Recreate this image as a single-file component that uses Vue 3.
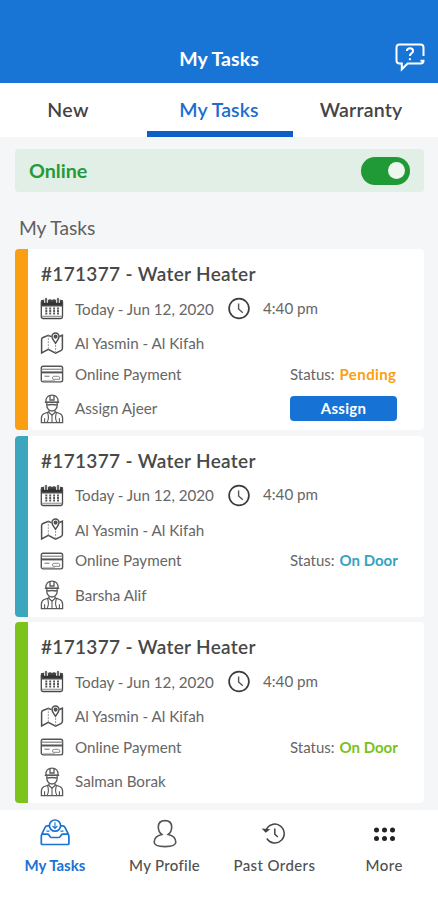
<script setup>
const tasks = [
  { tone: 'orange', status: 'Pending', person: 'Assign Ajeer', assign: true },
  { tone: 'teal', status: 'On Door', person: 'Barsha Alif' },
  { tone: 'green', status: 'On Door', person: 'Salman Borak' },
]
</script>

<template>
  <div class="screen">
    <header class="top">
      <h1>My Tasks</h1>
      <svg class="help" viewBox="0 0 32 30" fill="none" stroke="#fff" stroke-width="2">
        <path d="M29.500 14V5.500q0-3-3-3h-21q-3 0-3 3v13q0 3 3 3h2.300v5.800l5.800-5.800h13q2.900 0 2.900-2.800h-3" />
        <path d="M12.800 9q.3-2.700 3.200-2.700 3 0 3 2.600 0 1.500-1.600 2.500-1.500 1-1.500 2.600" />
        <path d="M15.900 16.200v2" />
      </svg>
    </header>

    <nav class="tabs">
      <div class="tab"><span class="t-new">New</span></div>
      <div class="tab active"><span>My Tasks</span></div>
      <div class="tab"><span class="t-war">Warranty</span></div>
    </nav>

    <main>
      <div class="online">
        <span>Online</span>
        <i class="switch"><b></b></i>
      </div>
      <h2>My Tasks</h2>

      <article v-for="t in tasks" :key="t.tone" class="card" :class="t.tone">
        <h3>#171377 - Water Heater</h3>
        <div class="row">
          <svg class="ico" width="24" height="24" viewBox="0 0 24 24" fill="none" stroke="#484848" stroke-width="1.300">
            <rect x="1.300" y="3.500" width="21.200" height="18" rx="1.800" />
            <path d="M1.600 4h20.800v4.800H1.600z" fill="#333" />
            <path d="M6 1v4.800M18 1v4.800" stroke="#fff" stroke-width="4" />
            <path d="M5.300 5.500V2q0-.8.7-.8t.7.800v3.500zM17.300 5.500V2q0-.8.7-.8t.7.800v3.500z" stroke-width="1" />
            <path d="M10 2.300v2M14 2.300v2" stroke-width="1.500" />
            <path d="M1.600 19.300h20.800" stroke="#888" stroke-width="1.100" />
            <path d="M6.300 10.500v7M10.200 10.500v7M14.100 10.500v7M18 10.500v7" stroke="#555" stroke-width="1.900" stroke-dasharray="2 .5" />
          </svg>
          <span class="txt when">Today - Jun 12, 2020</span>
          <svg class="clock" width="24" height="24" viewBox="0 0 24 24" fill="none" stroke="#3c3c3c">
            <circle cx="12" cy="11.500" r="9.900" stroke-width="1.700" />
            <path d="M11.600 6.400V12l4.200 3.800" stroke="#555" stroke-width="1.400" />
          </svg>
          <span class="txt time">4:40 pm</span>
        </div>
        <div class="row">
          <svg class="ico" width="24" height="24" viewBox="0 0 24 24" fill="none" stroke="#505050" stroke-width="1.500">
            <path d="M11.200 4.600 8.300 3.200 3 5.500Q1.600 6 1.600 7.600V21l6.700-3.600 7.300 3.800 5.300-2.600q1.500-.7 1.500-2V3.200l-2.900 1.300" />
            <path d="M8.300 3.200v14.200M15.600 13v8" stroke="#999" stroke-width="1" stroke-dasharray="2 1" />
            <path d="M15.500 11.200C13 8 12 6.500 12 4.600a3.500 3.500 0 0 1 7 0c0 1.900-1 3.400-3.500 6.600z" />
            <circle cx="15.600" cy="4.600" r="1.300" fill="#505050" />
          </svg>
          <span class="txt">Al Yasmin - Al Kifah</span>
        </div>
        <div class="row">
          <svg class="ico" width="24" height="24" viewBox="0 0 24 24" fill="none" stroke="#555" stroke-width="1.400">
            <rect x="1.300" y="4.200" width="21.300" height="15.700" rx="1.800" />
            <path d="M1.600 7.300h20.800" stroke="#999" />
            <path d="M1.600 10.400h20.800" stroke-width="2" />
            <path d="M4.500 14.300h5" stroke="#999" />
            <path d="M13 17.300q-1.500-3 1.200-3h4.300q1.700 0 1.200 3z" stroke="#888" stroke-width="1" />
            <path d="M3 18.400h12" stroke="#bbb" stroke-width="1" />
          </svg>
          <span class="txt">Online Payment</span>
          <span class="status">Status:<em>{{ t.status }}</em></span>
        </div>
        <div class="row">
          <svg class="ico" width="24" height="30" viewBox="0 0 24 30" fill="none" stroke="#5a5a5a" stroke-width="1.300">
            <path d="M5.800 8.200C5.800 3.600 8.400 1.200 12 1.200s6.200 2.400 6.200 7z" />
            <path d="M10 1.900v4.100h4V1.900M4.800 8.300h14.400" />
            <path d="M6.800 8.500v2.700c0 3.400 2.400 5.800 5.200 5.800s5.200-2.400 5.200-5.800V8.500M7.500 11q4.500-1 9 0" />
            <path d="M9 16.200v2.300L12 21.200l3-2.700v-2.300" />
            <path d="M9 17.800 4.300 19.500q-2.900 1-2.900 4.700v4.500h21.200v-4.500q0-3.700-2.900-4.700L15 17.800" />
            <path d="M7.600 18.800q1.800 5-.4 9.500M16.400 18.800q-1.800 5 .4 9.500M12 21.200v7.300M4.600 24.200v4.300M19.400 24.200v4.300" stroke-width="1.100" />
          </svg>
          <span class="txt">{{ t.person }}</span>
          <button v-if="t.assign">Assign</button>
        </div>
      </article>
    </main>

    <footer>
      <div class="item on">
        <svg width="32" height="30" viewBox="0 0 32 30" fill="none" stroke="#1a72d4" stroke-width="1.700">
          <path d="M10.500 7.800H8.300Q6.800 7.800 6 9.500L3 15.800q-.7 1.400-.7 3v6.700q0 1 1 1h25.600q1 0 1-1v-6.700q0-1.600-.7-3L26 9.500q-.8-1.700-2.300-1.700h-2.200" />
          <path d="M3 16.200h5.300q1.200 0 1.800 1l.9 1.400q.6.900 1.700.9h6.800q1.100 0 1.700-.9l.9-1.400q.6-1 1.800-1h5.300" />
          <path d="M7.500 13.200h3M24.500 13.200h-3" stroke-width="1.200" />
          <circle cx="16" cy="7.600" r="5.600" />
          <path d="M16 4.200v6.200M13.600 8l2.400 2.400L18.400 8" stroke-width="1.100" />
        </svg>
        <span class="n1">My Tasks</span>
      </div>
      <div class="item">
        <svg width="32" height="30" viewBox="0 0 32 30" fill="none" stroke="#555" stroke-width="1.600">
          <path d="M12.800 16.500C10.300 14.600 9.300 11.800 9.300 9 9.300 4.900 12 2.600 16 2.600s6.700 2.300 6.700 6.400c0 2.800-1 5.600-3.500 7.500 4.500 1 7.600 4 7.600 7.800 0 3.100-5.300 4.300-10.800 4.300S5.200 27.400 5.200 24.300c0-3.800 3.100-6.800 7.600-7.800z" />
        </svg>
        <span class="n2">My Profile</span>
      </div>
      <div class="item">
        <svg width="32" height="30" viewBox="0 0 32 30" fill="none" stroke="#444" stroke-width="1.500">
          <path d="M7.900 12.500A9.400 9.400 0 1 1 8.800 20.500" />
          <path d="m5.600 11.400 2.200 2.300 2.500-1.900z" fill="#222" />
          <path d="M16.800 10.500v5.700l3 2.800" />
        </svg>
        <span class="n3">Past Orders</span>
      </div>
      <div class="item">
        <svg width="32" height="30" viewBox="0 0 32 30" fill="#222">
          <circle v-for="n in 6" :key="n" :cx="8.500 + ((n - 1) % 3) * 8" :cy="n < 4 ? 12 : 20.500" r="2.500" />
        </svg>
        <span class="n4">More</span>
      </div>
    </footer>
  </div>
</template>

<style>
body { margin: 0; background: #fff; }
</style>

<style scoped>
* { box-sizing: border-box; }
.screen {
  width: 438px; height: 900px; overflow: hidden;
  display: flex; flex-direction: column;
  font-family: Lato, sans-serif; background: #f4f6f8; color: #444; white-space: nowrap;
}
h1, h2, h3 { margin: 0; }
.top {
  height: 83px; flex: none; background: #1975d5; color: #fff;
  display: grid; grid-template-columns: 50px 1fr 50px; padding-top: 42px;
}
h1 { grid-column: 2; text-align: center; font-size: 19.500px; line-height: 34px; font-weight: 700; letter-spacing: .05px; }
.help { width: 32px; height: 30px; margin-left: 6px; }
.tabs { height: 54px; flex: none; background: #fff; display: grid; grid-template-columns: 147px 146px 145px; }
.tab { height: 54px; text-align: center; font-size: 19.500px; font-weight: 600; line-height: 54px; letter-spacing: .2px; }
.t-new { margin-right: 11px; letter-spacing: .4px; }
.t-war { margin-right: 9px; }
.active { color: #1b6dd0; border-bottom: 6px solid #0a60c8; letter-spacing: .1px; }
.active span { margin-right: 2px; }
main { flex: 1; padding: 12px 14px 0 15px; }
.online {
  height: 43px; border-radius: 4px; background: #e2efe7; color: #259a38;
  display: flex; align-items: center; justify-content: space-between; padding: 0 14px;
  font-size: 19.700px; font-weight: 700;
}
.switch { width: 49px; height: 28px; border-radius: 14px; background: #1f9a36; display: flex; justify-content: flex-end; align-items: center; padding-right: 5px; }
.switch b { width: 17px; height: 17px; border-radius: 50%; background: #eef6f0; }
h2 { font-size: 19.200px; font-weight: 400; line-height: 30px; height: 57px; padding: 21px 0 0 4px; color: #606060; }
.card {
  height: 181px; margin-bottom: 5.500px; background: #fff; border-radius: 4px;
  border-left: 13px solid #fa9f12; padding-left: 12px; overflow: hidden;
  display: grid; grid-template-rows: 43px 34px 35px 26px 43px;
}
.teal { border-left-color: #3da6bf; }
.green { border-left-color: #7cc41c; }
h3 { font-size: 19px; font-weight: 600; line-height: 36px; padding: 7px 0 0 1px; color: #484848; letter-spacing: .32px; }
.row { display: flex; align-items: center; font-size: 15.200px; color: #666; }
.txt { margin-top: -1px; }
.ico { flex: none; margin-right: 11px; }
.clock { margin-left: 14px; margin-right: 12px; }
.when { width: 138px; letter-spacing: -.02px; }
.time { margin-top: -3px; }
.status { margin-left: auto; width: 134px; font-size: 15px; margin-top: -1px; }
em { font-style: normal; font-weight: 700; color: #fa9f12; margin-left: 5px; }
.orange em { letter-spacing: .4px; }
.teal em { color: #35a3bf; }
.green em { color: #77c21c; }
button {
  margin-left: auto; margin-right: 27px; width: 107px; height: 25px; padding: 0;
  border: 0; border-radius: 4px; background: #1672d4; color: #fff;
  font: 700 15px/23px Lato, sans-serif; letter-spacing: .3px;
}
footer { height: 90px; flex: none; background: #fff; display: grid; grid-template-columns: repeat(4, 109.750px); padding-top: 8px; }
.item { display: flex; flex-direction: column; align-items: center; font-size: 15px; font-weight: 500; line-height: 20px; color: #505050; }
.item span { margin-top: 7px; }
.on { color: #1a72d4; font-weight: 700; }
.n2 { letter-spacing: .3px; }
.n3 { letter-spacing: .4px; }
.n4 { letter-spacing: .5px; }
</style>
